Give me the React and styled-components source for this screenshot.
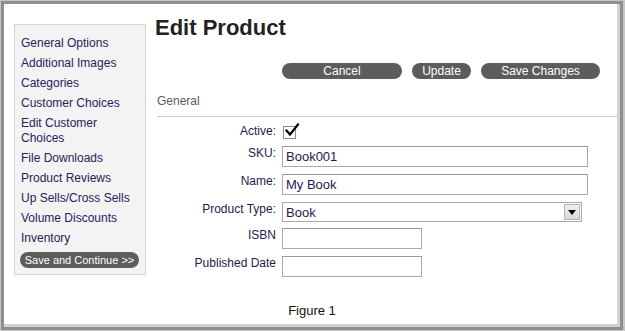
import React from "react";
import styled, { createGlobalStyle } from "styled-components";

const GlobalStyle = createGlobalStyle`
  html, body {
    margin: 0;
    padding: 0;
    background: #ffffff;
  }
  body {
    font-family: "Liberation Sans", Arial, sans-serif;
  }
`;

const menuItems = [
  "General Options",
  "Additional Images",
  "Categories",
  "Customer Choices",
  "Edit Customer Choices",
  "File Downloads",
  "Product Reviews",
  "Up Sells/Cross Sells",
  "Volume Discounts",
  "Inventory",
];

const App = () => {
  return (
    <>
      <GlobalStyle />
      <Frame>
        <Panel>
          <Columns>
            <Sidebar>
              <Menu>
                {menuItems.map((item) => (
                  <MenuItem key={item}>{item}</MenuItem>
                ))}
              </Menu>
              <PillButton $width="119px" $size="11px">
                Save and Continue &gt;&gt;
              </PillButton>
            </Sidebar>

            <Main>
              <Title>Edit Product</Title>
              <Actions>
                <PillButton $width="120px">Cancel</PillButton>
                <PillButton $width="59px">Update</PillButton>
                <PillButton $width="119px">Save Changes</PillButton>
              </Actions>
              <SectionHeader>General</SectionHeader>

              <Form>
                <Label>Active:</Label>
                <CheckBox>
                  <svg width="16" height="15" viewBox="0 0 16 15">
                    <path
                      d="M2.5 7.5 L6 11.5 L14 1.5"
                      fill="none"
                      stroke="#000"
                      strokeWidth="2.2"
                      strokeLinecap="square"
                    />
                  </svg>
                </CheckBox>

                <Label>SKU:</Label>
                <TextInput $width="306px" readOnly defaultValue="Book001" />

                <Label>Name:</Label>
                <TextInput $width="306px" readOnly defaultValue="My Book" />

                <Label>Product Type:</Label>
                <SelectBox>
                  <SelectValue>Book</SelectValue>
                  <SelectArrow>
                    <svg width="8" height="5" viewBox="0 0 8 5">
                      <path d="M0 0 H8 L4 5 Z" fill="#000" />
                    </svg>
                  </SelectArrow>
                </SelectBox>

                <Label>ISBN</Label>
                <TextInput $width="140px" readOnly defaultValue="" />

                <Label>Published Date</Label>
                <TextInput $width="140px" readOnly defaultValue="" />
              </Form>
            </Main>
          </Columns>
          <Caption>Figure 1</Caption>
        </Panel>
      </Frame>
    </>
  );
};

const Frame = styled.div`
  width: 625px;
  height: 331px;
  box-sizing: border-box;
  border-style: solid;
  border-color: #c6c6c6;
  border-width: 1px 2px 1px 1px;
  background: #ffffff;
`;

const Panel = styled.div`
  height: 100%;
  box-sizing: border-box;
  border: 3px solid #8e8e8e;
  box-shadow: inset -3px -3px 0 #d2d2d2;
  padding: 11px 3px 0 10px;
`;

const Columns = styled.div`
  display: flex;
  align-items: flex-start;
  gap: 9px;
`;

const Sidebar = styled.div`
  width: 132px;
  box-sizing: border-box;
  margin-top: 9px;
  padding: 11px 5px 6px 6px;
  background: #f3f3f3;
  border: 1px solid #d3d3d3;
  display: flex;
  flex-direction: column;
  align-items: flex-start;
`;

const Menu = styled.ul`
  list-style: none;
  margin: 0;
  padding: 0;
  display: flex;
  flex-direction: column;
  gap: 5px;
`;

const MenuItem = styled.li`
  font-size: 12px;
  line-height: 15px;
  color: #27225a;
`;

const PillButton = styled.button`
  width: ${(p) => p.$width};
  height: 16px;
  margin: 0;
  padding: 0;
  border: 0;
  border-radius: 8px;
  background: #5c5c5c;
  color: #ffffff;
  font-family: "Liberation Sans", Arial, sans-serif;
  font-size: ${(p) => p.$size || "12px"};
  line-height: 16px;
  text-align: center;
  white-space: nowrap;

  ${Sidebar} & {
    margin-top: 6px;
    margin-left: -1px;
  }
`;

const Main = styled.div`
  flex: 1;
  display: flex;
  flex-direction: column;
`;

const Title = styled.h1`
  margin: 0;
  font-size: 22px;
  line-height: 26px;
  font-weight: bold;
  color: #222222;
`;

const Actions = styled.div`
  display: flex;
  gap: 10px;
  margin-top: 22px;
  padding-left: 127px;
`;

const SectionHeader = styled.h2`
  margin: 15px 0 0 2px;
  padding-bottom: 7px;
  font-size: 12px;
  line-height: 15px;
  font-weight: normal;
  color: #5a5a68;
  border-bottom: 1px solid #cdcdcd;
`;

const Form = styled.div`
  display: grid;
  grid-template-columns: 121px 1fr;
  column-gap: 6px;
  row-gap: 7px;
  margin-top: 7px;
  align-items: start;
`;

const Label = styled.div`
  font-size: 12px;
  line-height: 15px;
  color: #221d4d;
  text-align: right;
`;

const CheckBox = styled.span`
  position: relative;
  display: block;
  width: 13px;
  height: 13px;
  margin-top: 2px;
  margin-left: 1px;
  box-sizing: border-box;
  border: 1px solid #8a8a8a;
  background: #ffffff;

  svg {
    position: absolute;
    left: 0px;
    top: -4px;
  }
`;

const TextInput = styled.input`
  display: block;
  width: ${(p) => p.$width};
  height: 21px;
  box-sizing: border-box;
  margin: 0;
  padding: 0 3px;
  border: 1px solid #a9a9a9;
  border-top-color: #9a9a9a;
  background: #ffffff;
  font-family: "Liberation Sans", Arial, sans-serif;
  font-size: 13px;
  color: #1f1a4d;
  outline: none;
`;

const SelectBox = styled.div`
  display: flex;
  align-items: center;
  width: 300px;
  height: 20px;
  margin-bottom: -1px;
  box-sizing: border-box;
  border: 1px solid #a9a9a9;
  background: #ffffff;
  padding-right: 1px;
`;

const SelectValue = styled.span`
  flex: 1;
  padding-left: 3px;
  font-size: 13px;
  color: #1f1a4d;
`;

const SelectArrow = styled.span`
  display: flex;
  align-items: center;
  justify-content: center;
  width: 16px;
  height: 16px;
  box-sizing: border-box;
  border: 1px solid #b4b4b4;
  background: linear-gradient(#f0f0f0, #d8d8d8);
`;

const Caption = styled.div`
  margin-top: 26px;
  margin-left: -7px;
  text-align: center;
  font-size: 13px;
  line-height: 15px;
  color: #111111;
`;

export default App;
